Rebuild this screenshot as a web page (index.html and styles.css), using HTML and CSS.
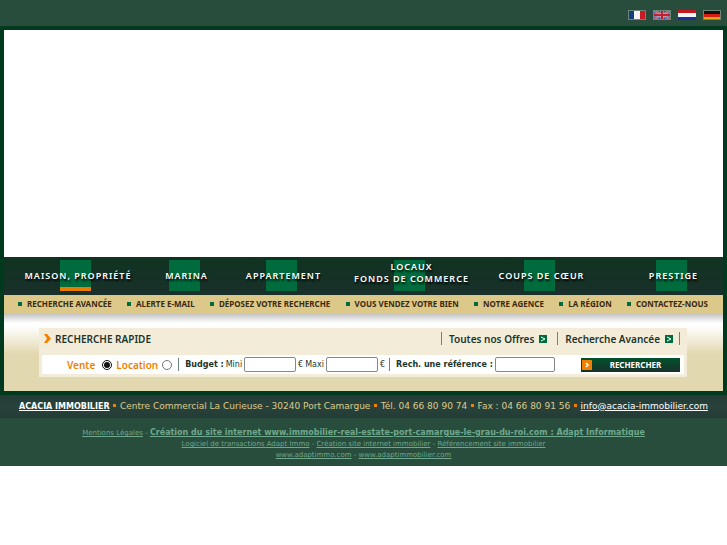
FILE: index.html
```html
<!DOCTYPE html>
<html lang="fr">
<head>
    <meta charset="UTF-8">
    <meta name="viewport" content="width=device-width, initial-scale=1.0">
    <title>Acacia Immobilier</title>
    <link rel="stylesheet" href="styles.css">
</head>
<body>
    <header class="top">
        <a href="#" aria-label="Français"><svg class="flag" viewBox="0 0 18 10"><rect width="18" height="10" fill="#f4f4f4"/><rect width="6" height="10" fill="#123f7c"/><rect x="12" width="6" height="10" fill="#c81a26"/></svg></a>
        <a href="#" aria-label="English"><svg class="flag" viewBox="0 0 18 10"><rect width="18" height="10" fill="#3c4fa0"/><path d="M0 0L18 10M18 0L0 10" stroke="#b9a9c4" stroke-width="2"/><path d="M0 0L18 10M18 0L0 10" stroke="#c8444c" stroke-width="1"/><path d="M9 0V10M0 5H18" stroke="#c9b4c4" stroke-width="3"/><path d="M9 0V10M0 5H18" stroke="#c3202e" stroke-width="2"/></svg></a>
        <a href="#" aria-label="Nederlands"><svg class="flag plain" viewBox="0 0 18 10"><rect width="18" height="10" fill="#f4f4f4"/><rect width="18" height="3" fill="#c4161c"/><rect y="7" width="18" height="3" fill="#1a2f9c"/></svg></a>
        <a href="#" aria-label="Deutsch"><svg class="flag" viewBox="0 0 18 10"><rect width="18" height="10" fill="#d81a10"/><rect width="18" height="4" fill="#111"/><rect y="7" width="18" height="3" fill="#e6a817"/></svg></a>
    </header>

    <main class="page">
        <div class="banner"></div>

        <nav class="menu">
            <a href="#" class="active">MAISON, PROPRIÉTÉ</a>
            <a href="#">MARINA</a>
            <a href="#">APPARTEMENT</a>
            <a href="#" class="double">LOCAUX<br>FONDS DE COMMERCE</a>
            <a href="#">COUPS DE CŒUR</a>
            <a href="#">PRESTIGE</a>
        </nav>

        <nav class="submenu">
            <a href="#">RECHERCHE AVANCÉE</a>
            <a href="#">ALERTE E-MAIL</a>
            <a href="#">DÉPOSEZ VOTRE RECHERCHE</a>
            <a href="#">VOUS VENDEZ VOTRE BIEN</a>
            <a href="#">NOTRE AGENCE</a>
            <a href="#">LA RÉGION</a>
            <a href="#">CONTACTEZ-NOUS</a>
        </nav>

        <div class="content">
            <section class="search">
                <div class="search-head">
                    <h1><svg class="chevron" viewBox="0 0 7 9"><path d="M0 0H3L7 4.500L3 9H0L3 4.500Z" fill="#f08000"/></svg>RECHERCHE RAPIDE</h1>
                    <a href="#">Toutes nos Offres <svg class="go" viewBox="0 0 8 8"><rect width="8" height="8" fill="#006b3c"/><path d="M2 2L6 4L2 6" fill="none" stroke="#fff"/></svg></a>
                    <a href="#" class="last">Recherche Avancée <svg class="go" viewBox="0 0 8 8"><rect width="8" height="8" fill="#006b3c"/><path d="M2 2L6 4L2 6" fill="none" stroke="#fff"/></svg></a>
                </div>
                <form class="search-form">
                    <label class="type">Vente <input type="radio" name="type" checked></label>
                    <label class="type">Location <input type="radio" name="type"></label>
                    <div class="group">
                        <b>Budget :</b>
                        <label>Mini <input type="text" class="price"> €</label>
                        <label>Maxi <input type="text" class="price"> €</label>
                    </div>
                    <label class="group"><b>Rech. une référence :</b> <input type="text" class="ref"></label>
                    <button type="submit"><svg viewBox="0 0 10 10"><rect width="10" height="10" fill="#f08000"/><path d="M4 3L6 5L4 7" fill="none" stroke="#fff" stroke-width="1.500"/></svg><span>RECHERCHER</span></button>
                </form>
            </section>
        </div>
    </main>

    <address class="contact">
        <a href="#"><b>ACACIA IMMOBILIER</b></a>
        <i></i>
        <span>Centre Commercial La Curieuse - 30240 Port Camargue</span>
        <i></i>
        <span>Tél. 04 66 80 90 74</span>
        <i></i>
        <span>Fax : 04 66 80 91 56</span>
        <i></i>
        <a href="#">info@acacia-immobilier.com</a>
    </address>

    <footer class="footer">
        <a href="#">Mentions Légales</a> - <a href="#"><b>Création du site internet www.immobilier-real-estate-port-camargue-le-grau-du-roi.com : Adapt Informatique</b></a><br>
        <a href="#">Logiciel de transactions Adapt Immo</a> - <a href="#">Création site internet immobilier</a> - <a href="#">Référencement site immobilier</a><br>
        <a href="#">www.adaptimmo.com</a> - <a href="#">www.adaptimmobilier.com</a>
    </footer>
</body>
</html>
```
FILE: styles.css
```css
* {
    box-sizing: border-box;
}
body {
    margin: 0;
    background: #fff;
    font-family: "DejaVu Sans", sans-serif;
    font-size: 8px;
    color: #1c352c;
}
a {
    color: inherit;
}
.top {
    display: flex;
    justify-content: flex-end;
    gap: 7px;
    height: 26px;
    padding: 10px 6px 0 0;
    background: #284d3c;
}
.flag {
    display: block;
    width: 18px;
    height: 10px;
    outline: 1px solid #6d8577;
    outline-offset: -1px;
}
.flag.plain {
    outline: 0;
}
.page {
    border: 4px solid #003a1e;
}
.banner {
    height: 227px;
    background: #fff;
}
.menu {
    display: grid;
    grid-template-columns: 143fr 74fr 120fr 136fr 124fr 122fr;
    height: 38px;
    background: linear-gradient(#103321, #19302a);
    font-family: "Noto Sans", sans-serif;
    font-size: 9px;
    font-weight: 600;
    line-height: 12px;
    letter-spacing: 1px;
}
.menu a {
    display: flex;
    align-items: center;
    justify-content: center;
    padding: 0 0 1px 5px;
    background: linear-gradient(#006b3c, #006b3c) center 3px / 31px 31px no-repeat;
    color: #fff;
    text-align: center;
    text-decoration: none;
    text-shadow: 1px 2px 2px #000;
    white-space: nowrap;
}
.menu a:last-child {
    margin-left: 18px;
}
.menu .active {
    background-image: linear-gradient(#006b3c 27px, #e87c00 27px);
}
.menu .double {
    padding-bottom: 6px;
}
.submenu {
    display: flex;
    align-items: center;
    justify-content: space-between;
    height: 19px;
    padding: 0 15px 2px 14px;
    background: #dcc888;
    color: #3b2a10;
    font-family: "Noto Sans", sans-serif;
    font-size: 8px;
    font-weight: 700;
    white-space: nowrap;
}
.submenu a {
    display: flex;
    align-items: center;
    gap: 5px;
    text-decoration: none;
}
.submenu a::before {
    content: "";
    width: 4px;
    height: 4px;
    background: #006b3c;
}
.content {
    padding: 14px 36px 14px 35px;
    background: linear-gradient(#c4c4c4, #fff 9px, #fff 12px, #e2d8b0 40px);
}
.search {
    padding: 0 3px 3px;
    background: #f3ecd9;
}
.search-head {
    display: flex;
    align-items: center;
    height: 27px;
    padding: 0 4px 6px 2px;
    font-family: "Noto Sans", sans-serif;
}
.search-head h1 {
    display: flex;
    align-items: center;
    gap: 4px;
    margin: 0 auto 0 0;
    font-size: 10px;
    font-weight: 600;
}
.chevron {
    width: 7px;
    height: 9px;
}
.search-head a {
    display: flex;
    align-items: center;
    gap: 5px;
    height: 13px;
    padding: 0 10px 0 7px;
    border-left: 1px solid #6d8577;
    font-size: 10px;
    font-weight: 600;
    text-decoration: none;
}
.search-head .last {
    padding-right: 6px;
    border-right: 1px solid #6d8577;
}
.go {
    width: 8px;
    height: 8px;
}
.search-form {
    display: flex;
    align-items: center;
    height: 19px;
    padding: 0 4px 0 25px;
    background: #fff;
    white-space: nowrap;
}
.search-form label {
    display: flex;
    align-items: center;
    gap: 2px;
}
.search-form .type {
    gap: 7px;
    margin-right: 4px;
    color: #f08000;
    font-family: "Noto Sans", sans-serif;
    font-size: 10px;
    font-weight: 600;
}
.search-form .type + .type {
    gap: 4px;
    margin-right: 6px;
}
.search-form input {
    margin: 0;
}
.search-form input[type="radio"] {
    width: 10px;
    height: 10px;
    accent-color: #111;
}
.search-form input[type="text"] {
    height: 15px;
    padding: 0 2px;
    border: 1px solid #888;
    border-radius: 2px;
    font-size: 8px;
}
.group {
    display: flex;
    align-items: center;
    gap: 2px;
    height: 13px;
    margin-right: 4px;
    padding-left: 6px;
    border-left: 1px solid #6d8577;
}
.search-form .price {
    width: 52px;
}
.search-form .ref {
    width: 60px;
}
.search-form button {
    display: flex;
    align-items: center;
    width: 99px;
    height: 14px;
    margin-left: auto;
    padding: 0 1px;
    border: 0;
    background: linear-gradient(#00532c, #19302a);
    color: #fff;
    font-family: "Noto Sans", sans-serif;
    font-size: 8px;
    font-weight: 700;
    cursor: pointer;
}
.search-form button svg {
    width: 10px;
    height: 10px;
}
.search-form button span {
    flex: 1;
}
.contact {
    display: flex;
    align-items: center;
    justify-content: space-between;
    height: 23px;
    padding: 0 19px 2px;
    background: linear-gradient(#243c35, #28423c 50%, #243c35);
    color: #dccb8c;
    font-size: 9px;
    font-style: normal;
    white-space: nowrap;
}
.contact a {
    color: #fff;
}
.contact b {
    font-size: 8px;
}
.contact i {
    width: 3px;
    height: 3px;
    background: #f08000;
}
.footer {
    padding: 10px 0 5px;
    background: #284d3c;
    color: #6fa88c;
    font-size: 7px;
    line-height: 11px;
    text-align: center;
}
.footer b {
    font-size: 8px;
    line-height: 1;
}
```
